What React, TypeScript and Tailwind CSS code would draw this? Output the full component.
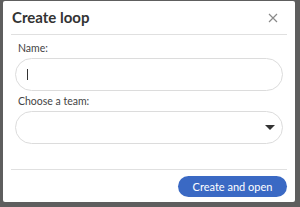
import React from 'react';

const CloseIcon = () => (
  <svg width="10" height="10" viewBox="0 0 10 10" fill="none" stroke="#8a8a8a" strokeWidth="1.2">
    <path d="M1 1L9 9M9 1L1 9" />
  </svg>
);

const Caret = () => (
  <svg width="10" height="5" viewBox="0 0 10 5">
    <path d="M0 0H10L5 5Z" fill="#333" />
  </svg>
);

export default function App() {
  return (
    <div className="w-[300px] h-[207px] bg-[#5e5e5e] pl-[3px] pt-[1px]" style={{ fontFamily: 'Lato, "Open Sans", sans-serif' }}>
      <div className="w-[292px] h-[201px] bg-white rounded-[2px] flex flex-col">
        {/* Header */}
        <div className="flex items-center justify-between pl-[9px] pr-[17px] h-[33px]">
          <h2 className="text-[15px] font-bold text-[#333]">Create loop</h2>
          <CloseIcon />
        </div>
        <div className="mx-[8px] border-t border-[#e0e0e0]" />

        {/* Body */}
        <div className="flex flex-col px-[12px] pt-[6px]">
          <label className="text-[10.5px] text-[#444] leading-[14px] pl-[3px]">Name:</label>
          <div className="mt-[3px] h-[33px] rounded-full border border-[#dcdcdc] flex items-center pl-[11px]">
            <span className="w-[1px] h-[11px] bg-[#333]" />
          </div>
          <label className="mt-[3px] text-[10.5px] text-[#444] leading-[14px] pl-[3px]">Choose a team:</label>
          <div className="mt-[3px] h-[33px] rounded-full border border-[#dcdcdc] flex items-center justify-end pr-[7px]">
            <Caret />
          </div>
        </div>

        <div className="mx-[8px] mt-[25px] border-t border-[#e0e0e0]" />

        {/* Footer */}
        <div className="flex justify-end pr-[8px] pt-[6px]">
          <button className="w-[109px] h-[21px] rounded-full bg-[#3a69c4] text-white text-[11px] font-normal leading-[21px]">
            Create and open
          </button>
        </div>
      </div>
    </div>
  );
}
